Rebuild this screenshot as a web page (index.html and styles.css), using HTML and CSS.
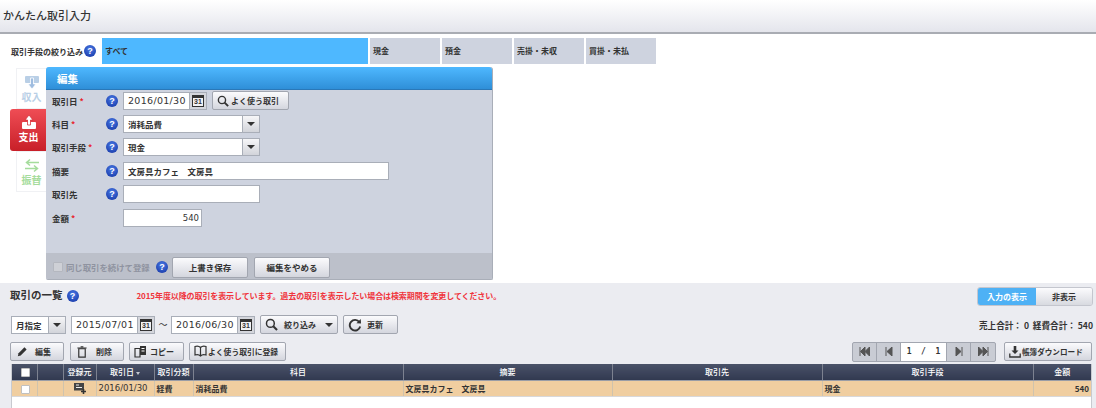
FILE: index.html
```html
<!DOCTYPE html>
<html lang="ja">
<head>
    <meta charset="UTF-8">
    <title>かんたん取引入力</title>
    <link rel="stylesheet" href="styles.css">
</head>
<body>
    <header class="page-header">
        <h1>かんたん取引入力</h1>
    </header>

    <div class="filter-row">
        <span class="filter-label">取引手段の絞り込み</span>
        <span class="help">?</span>
        <div class="filter-tabs">
            <div class="filter-tab filter-tab-all">すべて</div>
            <div class="filter-tab">現金</div>
            <div class="filter-tab">預金</div>
            <div class="filter-tab">売掛・未収</div>
            <div class="filter-tab">買掛・未払</div>
        </div>
    </div>

    <div class="editor">
        <div class="side-tabs">
            <div class="side-tab side-income">
                <svg width="16" height="15" viewBox="0 0 16 15"><rect x="1" y="1" width="14" height="7" rx="1" fill="#b9cfe6"/><path d="M8 14 L4 9 H6.5 V3 H9.5 V9 H12 Z" fill="#9fbde0" stroke="#fff" stroke-width=".8"/></svg>
                <span>収入</span>
            </div>
            <div class="side-tab side-expense">
                <svg width="16" height="15" viewBox="0 0 16 15"><rect x="1" y="7" width="14" height="7" rx="1" fill="#fff"/><path d="M8 0 L12 5 H9.5 V10 H6.5 V5 H4 Z" fill="#fff" stroke="#d5333b" stroke-width=".8"/></svg>
                <span>支出</span>
            </div>
            <div class="side-tab side-transfer">
                <svg width="16" height="15" viewBox="0 0 16 15"><path d="M15 4.5 H3 M6 1.5 L2.5 4.5 L6 7.5 M1 10.5 H13 M10 7.5 L13.5 10.5 L10 13.5" fill="none" stroke="#a5dc9c" stroke-width="1.5"/></svg>
                <span>振替</span>
            </div>
        </div>

        <section class="panel">
            <h2 class="panel-title">編集</h2>
            <div class="panel-body">
                <div class="form-row">
                    <label>取引日 <em>*</em></label>
                    <span class="help">?</span>
                    <div class="date-field"><span class="date-value">2016/01/30</span><span class="cal-btn"><span class="cal-icon">31</span></span></div>
                    <button class="btn btn-fav">
                        <svg width="12" height="12" viewBox="0 0 14 14"><circle cx="5.8" cy="5.8" r="4.2" fill="none" stroke="#333" stroke-width="1.6"/><path d="M8.9 8.9 L13 13" stroke="#333" stroke-width="2.2"/></svg>
                        よく使う取引
                    </button>
                </div>
                <div class="form-row">
                    <label>科目 <em>*</em></label>
                    <span class="help">?</span>
                    <div class="select-field"><span class="select-value">消耗品費</span><span class="select-arrow"><i class="caret"></i></span></div>
                </div>
                <div class="form-row">
                    <label>取引手段 <em>*</em></label>
                    <span class="help">?</span>
                    <div class="select-field"><span class="select-value">現金</span><span class="select-arrow"><i class="caret"></i></span></div>
                </div>
                <div class="form-row">
                    <label>摘要</label>
                    <span class="help">?</span>
                    <div class="text-field text-wide">文房具カフェ　文房具</div>
                </div>
                <div class="form-row">
                    <label>取引先</label>
                    <span class="help">?</span>
                    <div class="text-field text-mid"></div>
                </div>
                <div class="form-row">
                    <label>金額 <em>*</em></label>
                    <span class="help-gap"></span>
                    <div class="text-field text-amount">540</div>
                </div>
            </div>
            <div class="panel-footer">
                <span class="fake-check"></span>
                <span class="repeat-label">同じ取引を続けて登録</span>
                <span class="help">?</span>
                <button class="btn btn-footer">上書き保存</button>
                <button class="btn btn-footer">編集をやめる</button>
            </div>
        </section>
    </div>

    <section class="list">
        <div class="list-head">
            <h2>取引の一覧</h2>
            <span class="help help-list">?</span>
            <p class="notice">2015年度以降の取引を表示しています。過去の取引を表示したい場合は検索期間を変更してください。</p>
            <div class="toggle">
                <span class="toggle-on">入力の表示</span>
                <span class="toggle-off">非表示</span>
            </div>
        </div>

        <div class="list-search">
            <div class="select-field select-month"><span class="select-value">月指定</span><span class="select-arrow"><i class="caret"></i></span></div>
            <div class="date-field"><span class="date-value">2015/07/01</span><span class="cal-btn"><span class="cal-icon">31</span></span></div>
            <span class="tilde">〜</span>
            <div class="date-field"><span class="date-value">2016/06/30</span><span class="cal-btn"><span class="cal-icon">31</span></span></div>
            <button class="btn btn-narrow">
                <svg width="13" height="13" viewBox="0 0 14 14"><circle cx="5.8" cy="5.8" r="4.2" fill="none" stroke="#333" stroke-width="1.6"/><path d="M8.9 8.9 L13 13" stroke="#333" stroke-width="2.2"/></svg>
                <span>絞り込み</span><i class="caret"></i>
            </button>
            <button class="btn btn-refresh">
                <svg width="14" height="14" viewBox="0 0 14 14"><path d="M11.3 4 A5.3 5.3 0 1 0 12.2 8.5" fill="none" stroke="#333" stroke-width="1.9"/><path d="M8.4 5.2 L13 5.6 L12.8 .9 Z" fill="#333"/></svg>
                <span>更新</span>
            </button>
            <div class="totals">売上合計： 0 &nbsp;経費合計： 540</div>
        </div>

        <div class="list-actions">
            <button class="btn btn-action btn-edit">
                <svg width="11" height="11" viewBox="0 0 13 13"><path d="M1 12 L1.8 8.6 L8.8 1.6 L11.4 4.2 L4.4 11.2 Z" fill="#333"/></svg>
                <span>編集</span>
            </button>
            <button class="btn btn-action btn-delete">
                <svg width="10" height="12" viewBox="0 0 10 13"><path d="M1.5 3 H8.5 V12 H1.5 Z" fill="none" stroke="#333" stroke-width="1.3"/><path d="M0 2.2 H10 M3.5 .8 H6.5" stroke="#333" stroke-width="1.2"/></svg>
                <span>削除</span>
            </button>
            <button class="btn btn-copy">
                <svg width="13" height="13" viewBox="0 0 13 13"><path d="M1 3.5 H6 V12 H1 Z" fill="none" stroke="#333" stroke-width="1.2"/><path d="M6 1 H12 V10 H6 Z" fill="#333"/><path d="M7.5 3.5 H10.5 M7.5 6 H10.5" stroke="#fff"/></svg>
                <span>コピー</span>
            </button>
            <button class="btn btn-addfav">
                <svg width="13" height="13" viewBox="0 0 13 13"><path d="M6.5 2.5 C5 1 2.5 1 1 1.5 V10 C2.5 9.5 5 9.5 6.5 11 C8 9.5 10.5 9.5 12 10 V1.5 C10.5 1 8 1 6.5 2.5 Z M6.5 2.5 V11" fill="none" stroke="#333" stroke-width="1.2"/></svg>
                <span>よく使う取引に登録</span>
            </button>
            <div class="pager">
                <span class="pager-btn"><svg width="11" height="9" viewBox="0 0 11 9"><path d="M1 0 V9 M6 0 L1.5 4.5 L6 9 Z M10.5 0 L6 4.5 L10.5 9 Z" fill="#555" stroke="#555"/></svg></span>
                <span class="pager-btn"><svg width="8" height="9" viewBox="0 0 8 9"><path d="M1 0 V9 M7 0 L2 4.5 L7 9 Z" fill="#555" stroke="#555"/></svg></span>
                <span class="pager-page">1 &nbsp;/ &nbsp;1</span>
                <span class="pager-btn"><svg width="8" height="9" viewBox="0 0 8 9"><path d="M7 0 V9 M1 0 L6 4.5 L1 9 Z" fill="#555" stroke="#555"/></svg></span>
                <span class="pager-btn"><svg width="11" height="9" viewBox="0 0 11 9"><path d="M10 0 V9 M5 0 L9.5 4.5 L5 9 Z M.5 0 L5 4.5 L.5 9 Z" fill="#555" stroke="#555"/></svg></span>
            </div>
            <button class="btn btn-download">
                <svg width="12" height="12" viewBox="0 0 12 12"><path d="M4.7 0 H7.3 V4.5 H9.5 L6 8 L2.5 4.5 H4.7 Z" fill="#333"/><path d="M.8 7.5 V11 H11.2 V7.5" fill="none" stroke="#333" stroke-width="1.3"/></svg>
                <span>帳簿ダウンロード</span>
            </button>
        </div>

        <div class="table-wrap">
            <table class="deals">
                <colgroup>
                    <col class="c-check"><col class="c-blank"><col class="c-source"><col class="c-date"><col class="c-kind">
                    <col class="c-item"><col class="c-memo"><col class="c-partner"><col class="c-method"><col class="c-amount">
                </colgroup>
                <thead>
                    <tr>
                        <th><span class="cell-check"></span></th>
                        <th></th>
                        <th>登録元</th>
                        <th>取引日 <i class="sort-mark"></i></th>
                        <th>取引分類</th>
                        <th>科目</th>
                        <th>摘要</th>
                        <th>取引先</th>
                        <th>取引手段</th>
                        <th>金額</th>
                    </tr>
                </thead>
                <tbody>
                    <tr>
                        <td class="center"><span class="cell-check"></span></td>
                        <td></td>
                        <td class="center"><svg width="12" height="11" viewBox="0 0 12 11"><rect x="0" y="0" width="10" height="7.5" fill="#444"/><path d="M2 2 H5 M2 4.5 H8" stroke="#eee"/><path d="M9.5 6 V11 M7 8.5 H12" stroke="#333" stroke-width="1.6"/></svg></td>
                        <td class="deal-date">2016/01/30</td>
                        <td>経費</td>
                        <td>消耗品費</td>
                        <td>文房具カフェ　文房具</td>
                        <td></td>
                        <td>現金</td>
                        <td class="right">540</td>
                    </tr>
                </tbody>
            </table>
        </div>
    </section>
</body>
</html>
```

FILE: styles.css
```css
* {
    box-sizing: border-box;
}

html, body {
    height: 100%;
}

body {
    margin: 0;
    overflow: hidden;
    background: #fff;
    font-family: "Noto Sans CJK JP", "Liberation Sans", sans-serif;
    font-size: 9px;
    color: #333;
}

svg {
    flex: none;
}

/* ヘルプアイコン */
.help {
    display: flex;
    align-items: center;
    justify-content: center;
    flex: none;
    width: 12px;
    height: 12px;
    background: radial-gradient(circle at 50% 35%, #4b7be6, #1c3fae 80%);
    border-radius: 50%;
    font-family: "Liberation Sans", sans-serif;
    font-size: 9px;
    font-weight: 700;
    line-height: 12px;
    color: #fff;
}

.cal-icon {
    display: block;
    width: 12px;
    height: 12px;
    background: #f2f2f4;
    border: 1px solid #333;
    border-top-width: 3px;
    font-family: "Liberation Sans", sans-serif;
    font-size: 7px;
    font-weight: 700;
    line-height: 8px;
    text-align: center;
    color: #333;
}

/* ヘッダー */
.page-header {
    height: 34px;
    padding: 7px 0 0 3px;
    background: linear-gradient(#fff, #e4e5ec);
    border-bottom: 2px solid #a9acb3;
}

.page-header h1 {
    margin: 0;
    font-size: 11px;
    line-height: 17px;
    font-weight: 500;
    color: #333;
}

/* 取引手段の絞り込み */
.filter-row {
    display: flex;
    align-items: center;
    height: 26px;
    margin-top: 4px;
    padding-left: 11px;
    font-weight: 700;
}

.filter-label {
    width: 73px;
    font-size: 8px;
    white-space: nowrap;
}

.filter-row .help {
    margin-right: 6px;
}

.filter-tabs {
    display: flex;
    gap: 2px;
    height: 26px;
}

.filter-tab {
    width: 70px;
    padding-left: 3px;
    background: #ced3df;
    font-size: 8px;
    line-height: 25px;
}

.filter-tab-all {
    width: 266px;
    background: #4eb8ff;
}

/* 編集パネル */
.editor {
    display: flex;
    align-items: flex-start;
    height: 213px;
    margin-top: 3px;
    padding-left: 10px;
}

.side-tabs {
    display: flex;
    flex-direction: column;
    width: 37px;
    padding-top: 1px;
    flex: none;
}

.side-tab {
    display: flex;
    flex-direction: column;
    align-items: center;
    height: 41px;
    margin-left: 6px;
    margin-right: 1px;
    padding-top: 6px;
    background: #fff;
    border: 1px solid #f0f1f4;
    border-right: 0;
    font-size: 10px;
    font-weight: 700;
    line-height: 13px;
}

.side-income {
    color: #b9cfe6;
}

.side-transfer {
    color: #a5dc9c;
}

.side-expense {
    height: 42px;
    margin: 0;
    background: linear-gradient(#ef4d55, #c81f28);
    border: 0;
    border-radius: 3px 0 0 3px;
    color: #fff;
}

.panel {
    display: flex;
    flex-direction: column;
    width: 447px;
    height: 213px;
    margin-left: -1px;
    background: #ced3df;
    border-right: 1px solid #a9aeb8;
    border-bottom: 1px solid #a9aeb8;
    border-radius: 3px 3px 2px 2px;
}

.panel-title {
    height: 23px;
    margin: 0;
    padding-left: 11px;
    background: linear-gradient(#4eb8ff, #2f8fd8);
    border-bottom: 1px solid #2a78b8;
    border-radius: 3px 3px 0 0;
    font-size: 10.5px;
    line-height: 24px;
    font-weight: 700;
    color: #fff;
}

.panel-body {
    flex: 1;
    margin-top: -1px;
}

.form-row {
    display: flex;
    align-items: center;
    height: 23.4px;
    padding-left: 6px;
}

.form-row label {
    width: 54px;
    font-size: 8.5px;
    font-weight: 700;
    white-space: nowrap;
}

.form-row em {
    font-style: normal;
    color: #e8232c;
}

.help-gap {
    width: 12px;
}

.form-row .help, .help-gap {
    margin-right: 5px;
}

.date-field, .select-field, .text-field {
    display: flex;
    height: 18px;
    background: #fff;
    border: 1px solid #a9aeb8;
    font-size: 8.5px;
    font-weight: 700;
    line-height: 16px;
}

.date-field {
    width: 84px;
    flex: none;
}

.date-value {
    flex: 1;
    padding-left: 4px;
    font-family: "DejaVu Sans", sans-serif;
    font-size: 9.5px;
    font-weight: 400;
    letter-spacing: .3px;
    white-space: nowrap;
}

.cal-btn {
    display: flex;
    align-items: center;
    justify-content: center;
    width: 17px;
    background: #d4d6dc;
    border-left: 1px solid #a9aeb8;
}

.select-field {
    width: 137px;
}

.select-value {
    flex: 1;
    padding-left: 4px;
}

.select-arrow {
    display: flex;
    align-items: center;
    justify-content: center;
    width: 17px;
    background: linear-gradient(#f6f6f8, #d2d4da);
    border-left: 1px solid #a9aeb8;
}

.caret {
    flex: none;
    width: 0;
    height: 0;
    border-left: 4px solid transparent;
    border-right: 4px solid transparent;
    border-top: 4px solid #333;
}

.text-field {
    padding-left: 4px;
}

.text-wide {
    width: 266px;
}

.text-mid {
    width: 137px;
}

.text-amount {
    justify-content: flex-end;
    width: 79px;
    padding-right: 2px;
    font-family: "DejaVu Sans", sans-serif;
    font-weight: 400;
}

.btn {
    display: flex;
    align-items: center;
    height: 19px;
    padding: 0;
    background: linear-gradient(#fbfbfd, #d4d6de);
    border: 1px solid #a2a6b0;
    border-radius: 2px;
    font-family: inherit;
    font-size: 8px;
    font-weight: 700;
    color: #333;
    white-space: nowrap;
}

.btn-fav {
    width: 77px;
    margin-left: 5px;
    padding-left: 4px;
    gap: 2px;
}

.panel-footer {
    display: flex;
    align-items: center;
    height: 26px;
    padding: 2px 0 0 7px;
    background: #bcc0ca;
    border-radius: 0 0 2px 2px;
}

.fake-check {
    width: 10px;
    height: 10px;
    margin-right: 3px;
    background: #ced0d6;
    border: 1px solid #b4b7bf;
    border-radius: 1px;
}

.repeat-label {
    width: 90px;
    font-size: 8.4px;
    font-weight: 700;
    color: #8f93a0;
    white-space: nowrap;
}

.panel-footer .help {
    margin-right: 4px;
}

.btn-footer {
    justify-content: center;
    width: 76px;
    height: 21px;
    margin-right: 6px;
    font-size: 8.5px;
}

/* 取引の一覧 */
.list {
    height: 125px;
    margin-top: 3px;
    padding: 0 4px 0 11px;
    background: #ebecf1;
}

.list-head {
    display: flex;
    align-items: flex-start;
    height: 27px;
    padding-top: 4px;
}

.list-head h2 {
    margin: 0 4px 0 -1px;
    font-size: 10.5px;
    line-height: 16px;
    font-weight: 700;
}

.help-list {
    margin: 3px 58px 0 0;
}

.notice {
    flex: 1;
    margin: 0;
    font-size: 8px;
    font-weight: 700;
    line-height: 18px;
    letter-spacing: -.1px;
    color: #f0343c;
    white-space: nowrap;
}

.toggle {
    display: flex;
    width: 116px;
    height: 19px;
    margin-right: -1px;
    border-radius: 3px;
    overflow: hidden;
    border: 1px solid #c4c6ce;
    font-size: 8px;
    font-weight: 700;
    line-height: 17px;
    text-align: center;
}

.toggle-on {
    width: 58px;
    background: #4eb1f5;
    color: #fff;
}

.toggle-off {
    flex: 1;
    background: linear-gradient(#fbfbfd, #d8dae0);
}

.list-search {
    display: flex;
    align-items: center;
    height: 19px;
    margin-top: 5px;
}

.select-month {
    width: 55px;
    margin-right: 5px;
}

.tilde {
    width: 16px;
    text-align: center;
    font-size: 9px;
}

.btn-narrow {
    width: 78px;
    margin-left: 5px;
    padding-left: 4px;
    gap: 6px;
}

.btn-narrow .caret {
    margin-left: 3px;
}

.btn-refresh {
    width: 55px;
    margin-left: 5px;
    padding-left: 4px;
    gap: 5px;
}

.totals {
    margin-left: auto;
    margin-right: -1px;
    font-size: 8.6px;
    font-weight: 700;
    white-space: nowrap;
}

.list-actions {
    display: flex;
    align-items: center;
    height: 19px;
    margin-top: 8px;
    margin-left: -1px;
}

.btn-action {
    width: 54px;
}

.btn-edit {
    margin-right: 6px;
    padding-left: 6px;
    gap: 7px;
}

.btn-delete {
    margin-right: 5px;
    padding-left: 6px;
    gap: 9px;
}

.btn-copy {
    width: 55px;
    margin-right: 5px;
    padding-left: 4px;
    gap: 3px;
}

.btn-addfav {
    width: 97px;
    padding-left: 4px;
    gap: 1px;
    font-size: 7.8px;
}

.pager {
    display: flex;
    flex: none;
    height: 20px;
    margin-left: auto;
    background: #c9ccd4;
    border: 1px solid #a2a6b0;
    border-radius: 2px;
}

.pager-btn {
    display: flex;
    align-items: center;
    justify-content: center;
    width: 24px;
    border-right: 1px solid #a2a6b0;
}

.pager-btn:last-child {
    border-right: 0;
}

.pager-page {
    width: 46px;
    background: #fff;
    border-right: 1px solid #a2a6b0;
    font-family: "DejaVu Sans Mono", monospace;
    font-size: 8px;
    font-weight: 700;
    line-height: 18px;
    text-align: center;
}

.btn-download {
    width: 88px;
    margin-left: 8px;
    padding-left: 4px;
    gap: 1px;
    font-size: 7.6px;
}

.table-wrap {
    height: 44px;
    margin-top: 3px;
    background: #fff;
    border-right: 1px solid #c8cad0;
    border-left: 1px solid #c8cad0;
}

.deals {
    width: 1079px;
    table-layout: fixed;
    border-collapse: collapse;
    font-size: 8px;
    font-weight: 700;
}

.c-check { width: 25px; }
.c-blank { width: 26px; }
.c-source { width: 33px; }
.c-date { width: 58px; }
.c-kind { width: 39px; }
.c-item { width: 210px; }
.c-memo { width: 209px; }
.c-partner { width: 210px; }
.c-method { width: 211px; }
.c-amount { width: 58px; }

.deals th {
    height: 16px;
    padding: 0;
    background: linear-gradient(#4a5268, #313950);
    border-right: 1px solid #7d8290;
    border-bottom: 1px solid #9a9da6;
    font-weight: 500;
    color: #fff;
    text-align: center;
}

.deals td {
    height: 16px;
    padding: 0 2px;
    background: #f0cea0;
    border-right: 1px solid #cfc3ad;
    border-bottom: 1px solid #d8d8da;
    white-space: nowrap;
}

.deals td svg {
    display: block;
    margin: 0 auto;
}

.deals .center {
    text-align: center;
}

.deals .right {
    text-align: right;
}

.deals .deal-date {
    font-family: "DejaVu Sans", sans-serif;
    font-size: 8.5px;
    font-weight: 400;
}

.deals th:last-child, .deals td:last-child {
    border-right: 0;
}

.cell-check {
    display: inline-block;
    width: 9px;
    height: 9px;
    margin-left: 2px;
    vertical-align: middle;
    background: #fff;
    border: 1px solid #c0c0c0;
    border-radius: 1px;
}

.sort-mark {
    display: inline-block;
    width: 0;
    height: 0;
    border-left: 2.5px solid transparent;
    border-right: 2.5px solid transparent;
    border-top: 3px solid #c5c8d0;
}
```
